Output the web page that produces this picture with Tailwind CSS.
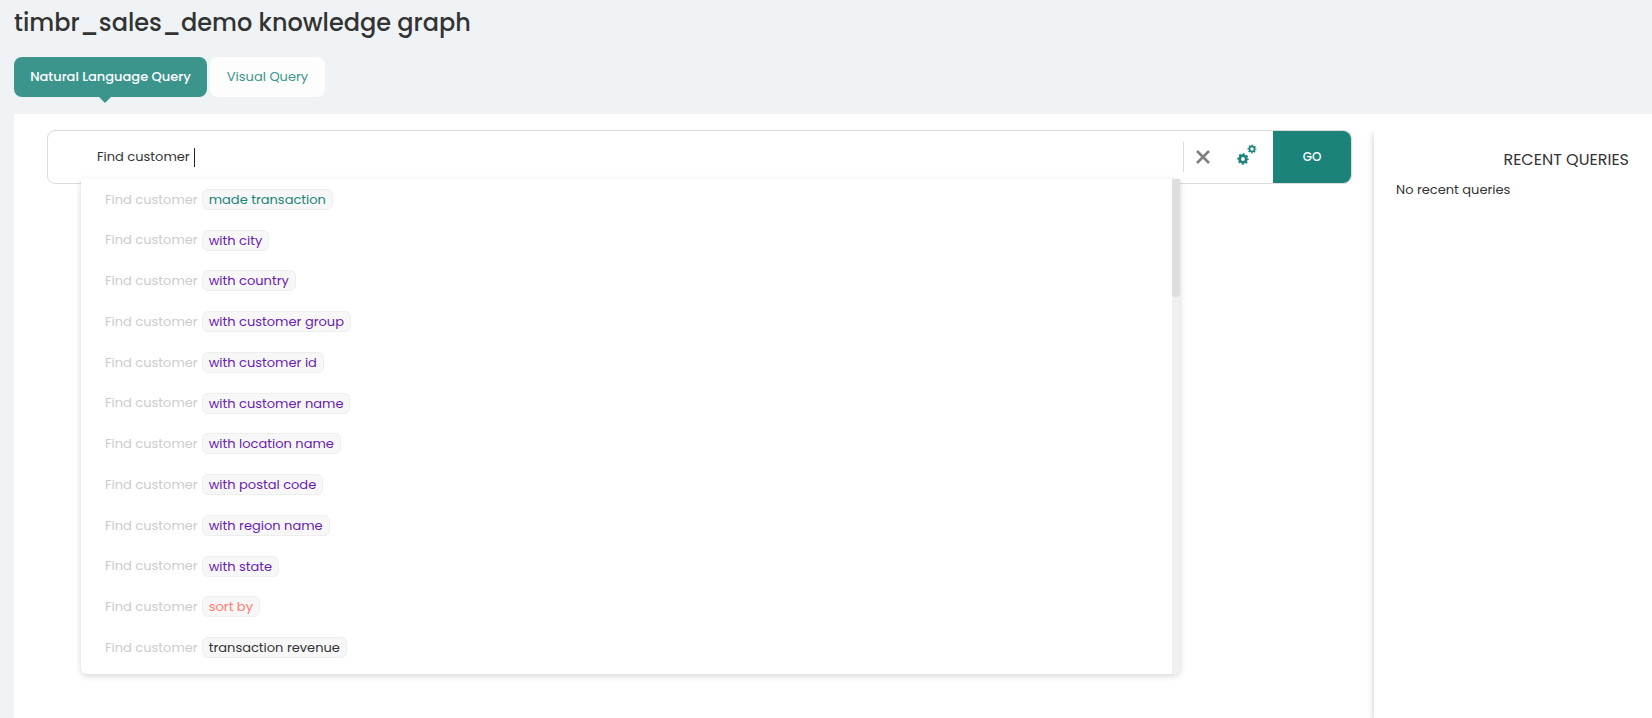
<!DOCTYPE html>
<html lang="en">
<head>
  <meta charset="UTF-8">
  <meta name="viewport" content="width=device-width, initial-scale=1.0">
  <title>timbr_sales_demo knowledge graph</title>
  <script src="https://cdn.jsdelivr.net/npm/@tailwindcss/browser@4"></script>
</head>
<body class="min-h-screen flex flex-col bg-[#eff3f6] pl-[14px] text-[#333] text-[13px] font-['Poppins','Inter',sans-serif]">

<h1 class="pt-1 text-2xl leading-[38px] font-medium">timbr_sales_demo knowledge graph</h1>

<nav class="mt-[15px] flex gap-[3px]">
  <button class="relative h-10 w-[193px] rounded-lg bg-[#3b958d] font-medium text-white">
    Natural Language Query
    <svg class="absolute left-[85px] top-full" width="12" height="6" viewBox="0 0 12 6" fill="#3b958d"><path d="M0 0h12L6 6z"/></svg>
  </button>
  <button class="h-10 w-[115px] rounded-lg bg-[#fdfdfd] text-[#3b958d]">Visual Query</button>
</nav>

<main class="mt-[17px] flex flex-1 bg-white pl-[33px] pt-4">
  <!-- search -->
  <section class="relative mr-[15px] flex-1">
    <form class="flex h-[54px] items-center rounded-lg border border-[#dcdcdc] bg-white" onsubmit="return false">
      <div class="flex flex-1 items-center pl-[49px]">
        <input id="query" type="text" aria-label="Query" value="Find customer " class="field-sizing-content outline-none">
        <span class="ml-px h-[19px] w-px bg-[#222]"></span>
      </div>
      <div class="flex h-[30px] items-center border-l border-[#dcdcdc] pl-3">
        <button type="button" aria-label="Clear">
          <svg width="14" height="14" viewBox="0 0 14 14" fill="none" stroke="#808080" stroke-width="2.600"><path d="M1 1l12 12M13 1L1 13"/></svg>
        </button>
        <button type="button" aria-label="Settings" class="ml-[27px] mr-4">
          <svg class="mb-1" width="20" height="22" viewBox="0 0 20 22" fill="none" stroke="#1b8379">
            <circle cx="6" cy="15" r="3.300" stroke-width="2.800"/>
            <circle cx="6" cy="15" r="4.900" stroke-width="1.700" stroke-dasharray="1.925" stroke-dashoffset="0.960"/>
            <circle cx="15" cy="5" r="2.600" stroke-width="1.700"/>
            <circle cx="15" cy="5" r="3.800" stroke-width="1.300" stroke-dasharray="1.492" stroke-dashoffset="0.750"/>
          </svg>
        </button>
      </div>
      <button type="submit" class="h-full w-[78px] rounded-r-lg bg-[#1b8379] text-xs font-medium text-white">GO</button>
    </form>

    <!-- suggestions -->
    <div class="absolute left-[34px] right-[172px] top-[49px] flex h-[495px] overflow-hidden rounded-b-md bg-white shadow-[0_2px_6px_rgba(0,0,0,0.16)]">
      <ul id="suggestions" class="flex flex-1 flex-col pb-[6px]"></ul>
      <div class="w-2 bg-[#f0f0f0]">
        <div class="h-[118px] rounded-b-sm bg-[#dedede]"></div>
      </div>
    </div>
  </section>

  <!-- recent -->
  <div class="w-[285px] overflow-hidden pl-[7px]">
    <aside class="h-full bg-white pl-[22px] pr-[23px] shadow-[-1px_3px_6px_rgba(0,0,0,0.16)]">
      <h2 class="pt-[18px] text-right text-base">RECENT QUERIES</h2>
      <p class="mt-2 leading-5">No recent queries</p>
    </aside>
  </div>
</main>

<script>
  const prefix = 'Find customer';
  const suggestions = [
    ['made transaction', 'text-[#1b8379]'],
    ['with city', 'text-[#6a1bb0]'],
    ['with country', 'text-[#6a1bb0]'],
    ['with customer group', 'text-[#6a1bb0]'],
    ['with customer id', 'text-[#6a1bb0]'],
    ['with customer name', 'text-[#6a1bb0]'],
    ['with location name', 'text-[#6a1bb0]'],
    ['with postal code', 'text-[#6a1bb0]'],
    ['with region name', 'text-[#6a1bb0]'],
    ['with state', 'text-[#6a1bb0]'],
    ['sort by', 'text-[#ff7b73]'],
    ['transaction revenue', 'text-[#333]'],
  ];

  const list = document.getElementById('suggestions');
  suggestions.forEach(([label, color]) => {
    const item = document.createElement('li');
    item.className = 'flex flex-1';
    item.innerHTML = `
      <button class="flex w-full items-center gap-1 pl-6 text-[#cccccc]">
        <span>${prefix}</span>
        <span class="rounded-md border border-[#eeeeee] bg-[#f7f7f7] px-1.5 leading-[19px] ${color}">${label}</span>
      </button>`;
    list.appendChild(item);
  });
</script>

</body>
</html>
